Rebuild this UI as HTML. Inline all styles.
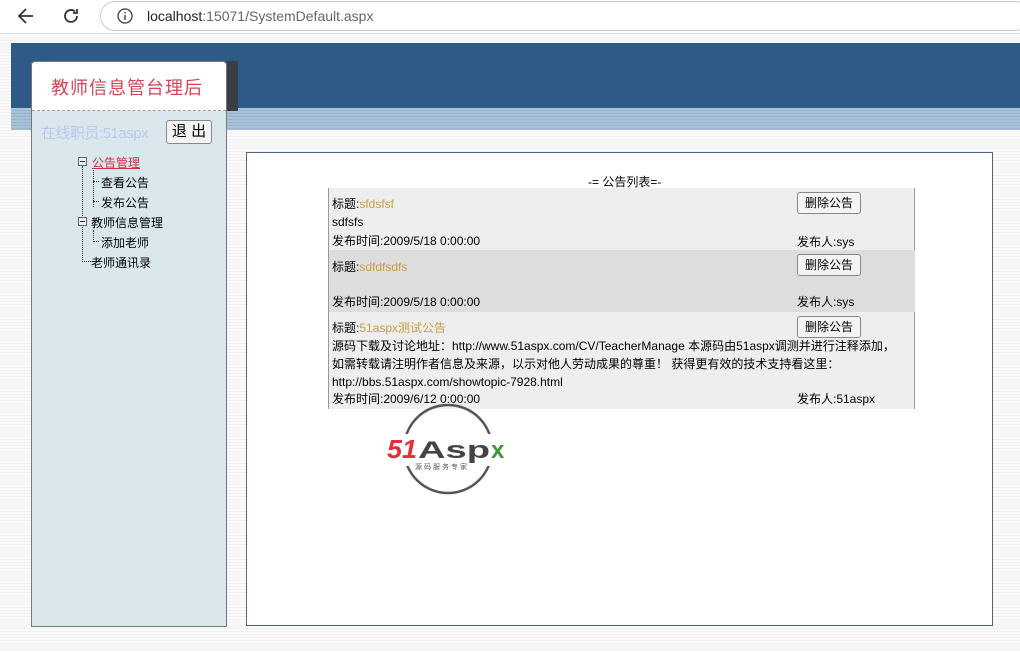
<!DOCTYPE html>
<html><head><meta charset="utf-8"><style>
*{margin:0;padding:0;box-sizing:border-box}
body{width:1020px;height:652px;overflow:hidden;background:#fff;font-family:"Liberation Sans","Noto Sans CJK SC",sans-serif;font-size:12px;color:#000;position:relative}
.abs{position:absolute}
.bar{left:0;top:0;width:1020px;height:34px;background:#fff;border-bottom:1px solid #ddd}
.url{left:100px;top:1px;width:930px;height:30px;border:1px solid #ccc;border-radius:16px;background:#fff;font-size:14px;line-height:28px;padding-left:46px;color:#222}
.page{left:0;top:35px;width:1020px;height:617px;background:repeating-linear-gradient(#fafafa 0 2px,#f1f1f1 2px 3px)}
.btn{position:absolute;border:1px solid #888;border-radius:3px;background:#f4f4f4;font-size:12px;text-align:center}
.row{position:absolute;left:328px;width:587px}
.t{position:absolute;white-space:nowrap;font-size:12px}
.o{color:#c8a040}
.h{position:absolute;width:6px;border-top:1px dotted #333}
</style></head><body>
<div class="abs bar"></div>
<svg class="abs" style="left:16px;top:6px" width="20" height="20" viewBox="0 0 20 20"><path d="M17 10H4M10 3L3 10l7 7" fill="none" stroke="#333" stroke-width="1.8"/></svg>
<svg class="abs" style="left:61px;top:6px" width="20" height="20" viewBox="0 0 20 20"><path d="M16 10a6 6 0 1 1-2-4.5M16 3v4h-4" fill="none" stroke="#333" stroke-width="1.8"/></svg>
<div class="abs url">localhost<span style="color:#666">:15071/SystemDefault.aspx</span></div>
<svg class="abs" style="left:116px;top:7px" width="18" height="18" viewBox="0 0 18 18"><circle cx="9" cy="9" r="7" fill="none" stroke="#555" stroke-width="1.5"/><path d="M9 8v5M9 5v1.5" stroke="#555" stroke-width="1.6"/></svg>
<div class="abs page"></div>
<div class="abs" style="left:11px;top:43px;width:1009px;height:65px;background:#2e5a87"></div>
<div class="abs" style="left:11px;top:108px;width:1009px;height:22px;background:repeating-linear-gradient(#a8c2d8 0 2px,#98b4cc 2px 3px)"></div>
<div class="abs" style="left:36px;top:61px;width:202px;height:50px;background:#3a3f47"></div>
<div class="abs" style="left:31px;top:61px;width:196px;height:566px;background:#dae8ee;border:1px solid #777;border-radius:4px 4px 0 0"></div>
<div class="abs" style="left:32px;top:62px;width:194px;height:49px;background:#fff;border-bottom:1px dashed #999;border-radius:4px 4px 0 0"></div>
<div class="abs" style="left:51px;top:74px;font-size:18px;color:#d0455a;letter-spacing:1px">教师信息管台理后</div>
<div class="abs" style="left:41px;top:122px;font-size:15px;color:#b8c8ee;letter-spacing:-0.5px">在线职员:51aspx</div>
<div class="btn" style="left:166px;top:120px;width:46px;height:24px;font-size:15px;line-height:22px">退 出</div>
<div class="abs" style="left:82px;top:166px;height:96px;border-left:1px dotted #333"></div>
<div class="abs" style="left:93px;top:170px;height:37px;border-left:1px dotted #333"></div>
<div class="abs" style="left:93px;top:230px;height:12px;border-left:1px dotted #333"></div>
<div class="h" style="left:93px;top:181px"></div>
<div class="h" style="left:93px;top:201px"></div>
<div class="h" style="left:93px;top:241px"></div>
<div class="h" style="left:82px;top:261px;width:9px"></div>
<div class="abs" style="left:78px;top:157px;width:9px;height:9px;border:1px solid #666;background:#eee"><div style="margin:3px 1px;height:1px;background:#333"></div></div>
<div class="abs" style="left:78px;top:217px;width:9px;height:9px;border:1px solid #666;background:#eee"><div style="margin:3px 1px;height:1px;background:#333"></div></div>
<div class="t" style="left:92px;top:154px;color:#d03040;text-decoration:underline">公告管理</div>
<div class="t" style="left:101px;top:174px">查看公告</div>
<div class="t" style="left:101px;top:194px">发布公告</div>
<div class="t" style="left:91px;top:214px">教师信息管理</div>
<div class="t" style="left:101px;top:234px">添加老师</div>
<div class="t" style="left:91px;top:254px">老师通讯录</div>
<div class="abs" style="left:246px;top:152px;width:747px;height:474px;background:#fff;border:1px solid #4a6480"></div>
<div class="t" style="left:588px;top:173px">-= 公告列表=-</div>
<div class="row" style="top:188px;height:62px;background:#eee;border-left:1px solid #999;border-right:1px solid #999"></div>
<div class="row" style="top:250px;height:62px;background:#ddd;border-left:1px solid #999"></div>
<div class="row" style="top:312px;height:97px;background:#eee;border-left:1px solid #999;border-right:1px solid #999"></div>
<div class="t" style="left:332px;top:195px">标题:<span class="o">sfdsfsf</span></div>
<div class="t" style="left:332px;top:215px">sdfsfs</div>
<div class="t" style="left:332px;top:232px">发布时间:2009/5/18 0:00:00</div>
<div class="t" style="left:797px;top:233px">发布人:sys</div>
<div class="btn" style="left:797px;top:192px;width:64px;height:22px;line-height:20px">删除公告</div>
<div class="t" style="left:332px;top:258px">标题:<span class="o">sdfdfsdfs</span></div>
<div class="t" style="left:332px;top:293px">发布时间:2009/5/18 0:00:00</div>
<div class="t" style="left:797px;top:293px">发布人:sys</div>
<div class="btn" style="left:797px;top:254px;width:64px;height:22px;line-height:20px">删除公告</div>
<div class="t" style="left:332px;top:319px">标题:<span class="o">51aspx测试公告</span></div>
<div class="btn" style="left:797px;top:316px;width:64px;height:22px;line-height:20px">删除公告</div>
<div class="t" style="left:332px;top:337px;line-height:18px;white-space:normal;width:566px">源码下载及讨论地址：http://www.51aspx.com/CV/TeacherManage 本源码由51aspx调测并进行注释添加，如需转载请注明作者信息及来源，以示对他人劳动成果的尊重！ 获得更有效的技术支持看这里：http://bbs.51aspx.com/showtopic-7928.html</div>
<div class="t" style="left:332px;top:390px">发布时间:2009/6/12 0:00:00</div>
<div class="t" style="left:797px;top:390px">发布人:51aspx</div>
<svg class="abs" style="left:385px;top:402px" width="130" height="95" viewBox="0 0 130 95"><circle cx="63" cy="47" r="44" fill="none" stroke="#555" stroke-width="2.5"/>
<rect x="14" y="32" width="98" height="32" fill="#fff"/>
<text x="2" y="56" font-family="Liberation Sans" font-weight="bold" font-style="italic" font-size="26" fill="#e03038" textLength="30" lengthAdjust="spacingAndGlyphs">51</text>
<text x="33" y="56" font-family="Liberation Sans" font-weight="bold" font-size="24" fill="#444" textLength="72" lengthAdjust="spacingAndGlyphs">Asp</text>
<text x="106" y="56" font-family="Liberation Sans" font-weight="bold" font-size="24" fill="#3a9a3a">x</text>
<text x="30" y="67" font-family="Noto Sans CJK SC" font-size="7" fill="#555" letter-spacing="2">源码服务专家</text></svg>
</body></html>
